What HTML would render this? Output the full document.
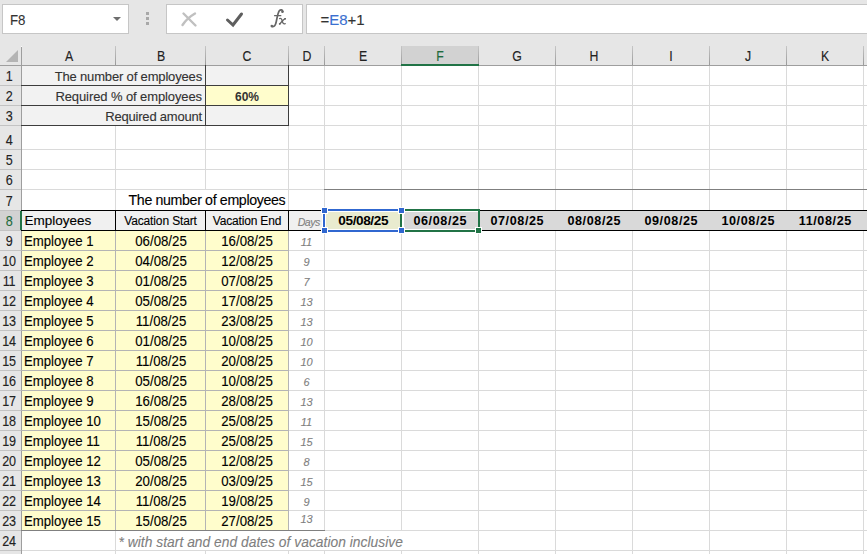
<!DOCTYPE html>
<html><head><meta charset="utf-8"><title>sheet</title><style>
html,body{margin:0;padding:0}
body{width:867px;height:554px;overflow:hidden;background:#e6e6e6;position:relative;font-family:"Liberation Sans",sans-serif}
.a{position:absolute}
.t{position:absolute;white-space:nowrap;line-height:1;-webkit-text-stroke:0.12px currentColor}
svg.a{display:block}
</style></head><body>
<div class="a" style="left:2px;top:4px;width:127px;height:30px;background:#fff;box-sizing:border-box;border:1px solid #c6c6c6;"></div>
<div class="t" style="top:12.10px;font-size:15px;color:#333;font-weight:normal;font-style:normal;left:10px;transform:scaleX(0.885);transform-origin:0 0;">F8</div>
<div class="a" style="left:113px;top:17px;width:0;height:0;border-left:4px solid transparent;border-right:4px solid transparent;border-top:4px solid #6e6e6e"></div>
<div class="a" style="left:146px;top:12px;width:3px;height:3px;background:#a8a8a8;"></div>
<div class="a" style="left:146px;top:17px;width:3px;height:3px;background:#a8a8a8;"></div>
<div class="a" style="left:146px;top:22px;width:3px;height:3px;background:#a8a8a8;"></div>
<div class="a" style="left:166px;top:4px;width:137px;height:30px;background:#fff;box-sizing:border-box;border:1px solid #c6c6c6;"></div>
<svg class="a" style="left:176px;top:8px" width="26" height="22" viewBox="0 0 26 22"><path d="M6.5 17 C9.5 12.5 13 9 19 5.5 M7.5 5.5 C11 9 15 13 19.5 17.5" stroke="#c0c0c0" stroke-width="2.4" fill="none" stroke-linecap="round"/></svg>
<svg class="a" style="left:222px;top:8px" width="26" height="22" viewBox="0 0 26 22"><path d="M5.5 12 L11 17 L19.5 6" stroke="#5e5e5e" stroke-width="3" fill="none" stroke-linecap="round" stroke-linejoin="miter"/></svg>
<svg class="a" style="left:264px;top:6px" width="28" height="26" viewBox="0 0 28 26"><g fill="none" stroke="#666" stroke-linecap="round"><path d="M18.8 5.6 C18.6 3.6 16.6 3.2 15.3 4.8 C14 6.6 13.2 11 12.3 15.5 C11.6 19 10.5 21.2 8.2 20.6" stroke-width="1.7"/><path d="M10.6 9.7 L16.8 9.7" stroke-width="1.3"/><path d="M15.6 12.6 C17.2 12 17.8 13.2 18.3 15 C18.8 17 19.4 18.6 21.2 17.6" stroke-width="1.3"/><path d="M21.4 12.6 C19.8 13.2 17.6 15.6 15.8 18" stroke-width="1.3"/></g><g fill="#666"><circle cx="18.4" cy="5.8" r="1.25"/><circle cx="7.8" cy="20" r="1.3"/><circle cx="21" cy="12.8" r="0.9"/><circle cx="15.7" cy="17.8" r="0.9"/></g></svg>
<div class="a" style="left:306px;top:4px;width:600px;height:30px;background:#fff;box-sizing:border-box;border:1px solid #c6c6c6;"></div>
<div class="t" style="top:11.90px;font-size:15px;color:#333;font-weight:normal;font-style:normal;left:320.4px;">=<span style="color:#3a6fd0">E8</span>+1</div>
<div class="a" style="left:402px;top:46px;width:76px;height:18px;background:#d2d2d2;"></div>
<div class="a" style="left:115px;top:46px;width:1px;height:19px;background:linear-gradient(#c6c6c6,#9a9a9a);"></div>
<div class="a" style="left:205px;top:46px;width:1px;height:19px;background:linear-gradient(#c6c6c6,#9a9a9a);"></div>
<div class="a" style="left:288px;top:46px;width:1px;height:19px;background:linear-gradient(#c6c6c6,#9a9a9a);"></div>
<div class="a" style="left:324px;top:46px;width:1px;height:19px;background:linear-gradient(#c6c6c6,#9a9a9a);"></div>
<div class="a" style="left:401px;top:46px;width:1px;height:19px;background:linear-gradient(#c6c6c6,#9a9a9a);"></div>
<div class="a" style="left:478px;top:46px;width:1px;height:19px;background:linear-gradient(#c6c6c6,#9a9a9a);"></div>
<div class="a" style="left:555px;top:46px;width:1px;height:19px;background:linear-gradient(#c6c6c6,#9a9a9a);"></div>
<div class="a" style="left:632px;top:46px;width:1px;height:19px;background:linear-gradient(#c6c6c6,#9a9a9a);"></div>
<div class="a" style="left:709px;top:46px;width:1px;height:19px;background:linear-gradient(#c6c6c6,#9a9a9a);"></div>
<div class="a" style="left:786px;top:46px;width:1px;height:19px;background:linear-gradient(#c6c6c6,#9a9a9a);"></div>
<div class="a" style="left:863px;top:46px;width:1px;height:19px;background:linear-gradient(#c6c6c6,#9a9a9a);"></div>
<div class="a" style="left:0px;top:65px;width:868px;height:1px;background:#9e9e9e;"></div>
<div class="a" style="left:401px;top:64px;width:78px;height:2px;background:#217346;"></div>
<div class="t" style="top:48.90px;font-size:14.3px;color:#222;font-weight:normal;font-style:normal;left:-131.5px;width:400px;text-align:center;transform:scaleX(0.86);">A</div>
<div class="t" style="top:48.90px;font-size:14.3px;color:#222;font-weight:normal;font-style:normal;left:-39.5px;width:400px;text-align:center;transform:scaleX(0.86);">B</div>
<div class="t" style="top:48.90px;font-size:14.3px;color:#222;font-weight:normal;font-style:normal;left:47.0px;width:400px;text-align:center;transform:scaleX(0.86);">C</div>
<div class="t" style="top:48.90px;font-size:14.3px;color:#222;font-weight:normal;font-style:normal;left:106.5px;width:400px;text-align:center;transform:scaleX(0.86);">D</div>
<div class="t" style="top:48.90px;font-size:14.3px;color:#222;font-weight:normal;font-style:normal;left:163.0px;width:400px;text-align:center;transform:scaleX(0.86);">E</div>
<div class="t" style="top:48.90px;font-size:14.3px;color:#1e6b3c;font-weight:normal;font-style:normal;left:240.0px;width:400px;text-align:center;transform:scaleX(0.86);">F</div>
<div class="t" style="top:48.90px;font-size:14.3px;color:#222;font-weight:normal;font-style:normal;left:317.0px;width:400px;text-align:center;transform:scaleX(0.86);">G</div>
<div class="t" style="top:48.90px;font-size:14.3px;color:#222;font-weight:normal;font-style:normal;left:394.0px;width:400px;text-align:center;transform:scaleX(0.86);">H</div>
<div class="t" style="top:48.90px;font-size:14.3px;color:#222;font-weight:normal;font-style:normal;left:471.0px;width:400px;text-align:center;transform:scaleX(0.86);">I</div>
<div class="t" style="top:48.90px;font-size:14.3px;color:#222;font-weight:normal;font-style:normal;left:548.0px;width:400px;text-align:center;transform:scaleX(0.86);">J</div>
<div class="t" style="top:48.90px;font-size:14.3px;color:#222;font-weight:normal;font-style:normal;left:625.0px;width:400px;text-align:center;transform:scaleX(0.86);">K</div>
<svg class="a" style="left:0;top:46px" width="21" height="19"><polygon points="6,16 18,4 18,16" fill="#b4b4b4"/></svg>
<div class="a" style="left:21px;top:47px;width:1px;height:508px;background:#9e9e9e;"></div>
<div class="a" style="left:21px;top:46px;width:1px;height:1px;background:#fafafa;"></div>
<div class="a" style="left:22px;top:66px;width:845px;height:488px;background:#fff;"></div>
<div class="a" style="left:0px;top:211px;width:21px;height:19px;background:#d2d2d2;"></div>
<div class="a" style="left:0px;top:85px;width:21px;height:1px;background:#c3c3c3;"></div>
<div class="t" style="top:69.20px;font-size:14.3px;color:#222;font-weight:normal;font-style:normal;letter-spacing:-0.3px;left:-191.5px;width:400px;text-align:center;transform:scaleX(0.88);">1</div>
<div class="a" style="left:0px;top:105px;width:21px;height:1px;background:#c3c3c3;"></div>
<div class="t" style="top:89.20px;font-size:14.3px;color:#222;font-weight:normal;font-style:normal;letter-spacing:-0.3px;left:-191.5px;width:400px;text-align:center;transform:scaleX(0.88);">2</div>
<div class="a" style="left:0px;top:125px;width:21px;height:1px;background:#c3c3c3;"></div>
<div class="t" style="top:109.20px;font-size:14.3px;color:#222;font-weight:normal;font-style:normal;letter-spacing:-0.3px;left:-191.5px;width:400px;text-align:center;transform:scaleX(0.88);">3</div>
<div class="a" style="left:0px;top:149px;width:21px;height:1px;background:#c3c3c3;"></div>
<div class="t" style="top:133.20px;font-size:14.3px;color:#222;font-weight:normal;font-style:normal;letter-spacing:-0.3px;left:-191.5px;width:400px;text-align:center;transform:scaleX(0.88);">4</div>
<div class="a" style="left:0px;top:169px;width:21px;height:1px;background:#c3c3c3;"></div>
<div class="t" style="top:153.20px;font-size:14.3px;color:#222;font-weight:normal;font-style:normal;letter-spacing:-0.3px;left:-191.5px;width:400px;text-align:center;transform:scaleX(0.88);">5</div>
<div class="a" style="left:0px;top:189px;width:21px;height:1px;background:#c3c3c3;"></div>
<div class="t" style="top:173.20px;font-size:14.3px;color:#222;font-weight:normal;font-style:normal;letter-spacing:-0.3px;left:-191.5px;width:400px;text-align:center;transform:scaleX(0.88);">6</div>
<div class="a" style="left:0px;top:210px;width:21px;height:1px;background:#c3c3c3;"></div>
<div class="t" style="top:194.20px;font-size:14.3px;color:#222;font-weight:normal;font-style:normal;letter-spacing:-0.3px;left:-191.5px;width:400px;text-align:center;transform:scaleX(0.88);">7</div>
<div class="a" style="left:0px;top:230px;width:21px;height:1px;background:#c3c3c3;"></div>
<div class="t" style="top:214.20px;font-size:14.3px;color:#1e6b3c;font-weight:normal;font-style:normal;letter-spacing:-0.3px;left:-191.5px;width:400px;text-align:center;transform:scaleX(0.88);">8</div>
<div class="a" style="left:0px;top:250px;width:21px;height:1px;background:#c3c3c3;"></div>
<div class="t" style="top:234.20px;font-size:14.3px;color:#222;font-weight:normal;font-style:normal;letter-spacing:-0.3px;left:-191.5px;width:400px;text-align:center;transform:scaleX(0.88);">9</div>
<div class="a" style="left:0px;top:270px;width:21px;height:1px;background:#c3c3c3;"></div>
<div class="t" style="top:254.20px;font-size:14.3px;color:#222;font-weight:normal;font-style:normal;letter-spacing:-0.3px;left:-191.5px;width:400px;text-align:center;transform:scaleX(0.88);">10</div>
<div class="a" style="left:0px;top:290px;width:21px;height:1px;background:#c3c3c3;"></div>
<div class="t" style="top:274.20px;font-size:14.3px;color:#222;font-weight:normal;font-style:normal;letter-spacing:-0.3px;left:-191.5px;width:400px;text-align:center;transform:scaleX(0.88);">11</div>
<div class="a" style="left:0px;top:310px;width:21px;height:1px;background:#c3c3c3;"></div>
<div class="t" style="top:294.20px;font-size:14.3px;color:#222;font-weight:normal;font-style:normal;letter-spacing:-0.3px;left:-191.5px;width:400px;text-align:center;transform:scaleX(0.88);">12</div>
<div class="a" style="left:0px;top:330px;width:21px;height:1px;background:#c3c3c3;"></div>
<div class="t" style="top:314.20px;font-size:14.3px;color:#222;font-weight:normal;font-style:normal;letter-spacing:-0.3px;left:-191.5px;width:400px;text-align:center;transform:scaleX(0.88);">13</div>
<div class="a" style="left:0px;top:350px;width:21px;height:1px;background:#c3c3c3;"></div>
<div class="t" style="top:334.20px;font-size:14.3px;color:#222;font-weight:normal;font-style:normal;letter-spacing:-0.3px;left:-191.5px;width:400px;text-align:center;transform:scaleX(0.88);">14</div>
<div class="a" style="left:0px;top:370px;width:21px;height:1px;background:#c3c3c3;"></div>
<div class="t" style="top:354.20px;font-size:14.3px;color:#222;font-weight:normal;font-style:normal;letter-spacing:-0.3px;left:-191.5px;width:400px;text-align:center;transform:scaleX(0.88);">15</div>
<div class="a" style="left:0px;top:390px;width:21px;height:1px;background:#c3c3c3;"></div>
<div class="t" style="top:374.20px;font-size:14.3px;color:#222;font-weight:normal;font-style:normal;letter-spacing:-0.3px;left:-191.5px;width:400px;text-align:center;transform:scaleX(0.88);">16</div>
<div class="a" style="left:0px;top:410px;width:21px;height:1px;background:#c3c3c3;"></div>
<div class="t" style="top:394.20px;font-size:14.3px;color:#222;font-weight:normal;font-style:normal;letter-spacing:-0.3px;left:-191.5px;width:400px;text-align:center;transform:scaleX(0.88);">17</div>
<div class="a" style="left:0px;top:430px;width:21px;height:1px;background:#c3c3c3;"></div>
<div class="t" style="top:414.20px;font-size:14.3px;color:#222;font-weight:normal;font-style:normal;letter-spacing:-0.3px;left:-191.5px;width:400px;text-align:center;transform:scaleX(0.88);">18</div>
<div class="a" style="left:0px;top:450px;width:21px;height:1px;background:#c3c3c3;"></div>
<div class="t" style="top:434.20px;font-size:14.3px;color:#222;font-weight:normal;font-style:normal;letter-spacing:-0.3px;left:-191.5px;width:400px;text-align:center;transform:scaleX(0.88);">19</div>
<div class="a" style="left:0px;top:470px;width:21px;height:1px;background:#c3c3c3;"></div>
<div class="t" style="top:454.20px;font-size:14.3px;color:#222;font-weight:normal;font-style:normal;letter-spacing:-0.3px;left:-191.5px;width:400px;text-align:center;transform:scaleX(0.88);">20</div>
<div class="a" style="left:0px;top:490px;width:21px;height:1px;background:#c3c3c3;"></div>
<div class="t" style="top:474.20px;font-size:14.3px;color:#222;font-weight:normal;font-style:normal;letter-spacing:-0.3px;left:-191.5px;width:400px;text-align:center;transform:scaleX(0.88);">21</div>
<div class="a" style="left:0px;top:510px;width:21px;height:1px;background:#c3c3c3;"></div>
<div class="t" style="top:494.20px;font-size:14.3px;color:#222;font-weight:normal;font-style:normal;letter-spacing:-0.3px;left:-191.5px;width:400px;text-align:center;transform:scaleX(0.88);">22</div>
<div class="a" style="left:0px;top:530px;width:21px;height:1px;background:#c3c3c3;"></div>
<div class="t" style="top:514.20px;font-size:14.3px;color:#222;font-weight:normal;font-style:normal;letter-spacing:-0.3px;left:-191.5px;width:400px;text-align:center;transform:scaleX(0.88);">23</div>
<div class="a" style="left:0px;top:550px;width:21px;height:1px;background:#c3c3c3;"></div>
<div class="t" style="top:534.20px;font-size:14.3px;color:#222;font-weight:normal;font-style:normal;letter-spacing:-0.3px;left:-191.5px;width:400px;text-align:center;transform:scaleX(0.88);">24</div>
<div class="a" style="left:20px;top:211px;width:2px;height:19px;background:#217346;"></div>
<div class="a" style="left:22px;top:85px;width:846px;height:1px;background:#dadada;"></div>
<div class="a" style="left:22px;top:105px;width:846px;height:1px;background:#dadada;"></div>
<div class="a" style="left:22px;top:125px;width:846px;height:1px;background:#dadada;"></div>
<div class="a" style="left:22px;top:149px;width:846px;height:1px;background:#dadada;"></div>
<div class="a" style="left:22px;top:169px;width:846px;height:1px;background:#dadada;"></div>
<div class="a" style="left:22px;top:189px;width:846px;height:1px;background:#dadada;"></div>
<div class="a" style="left:22px;top:210px;width:846px;height:1px;background:#dadada;"></div>
<div class="a" style="left:22px;top:230px;width:846px;height:1px;background:#dadada;"></div>
<div class="a" style="left:22px;top:250px;width:846px;height:1px;background:#dadada;"></div>
<div class="a" style="left:22px;top:270px;width:846px;height:1px;background:#dadada;"></div>
<div class="a" style="left:22px;top:290px;width:846px;height:1px;background:#dadada;"></div>
<div class="a" style="left:22px;top:310px;width:846px;height:1px;background:#dadada;"></div>
<div class="a" style="left:22px;top:330px;width:846px;height:1px;background:#dadada;"></div>
<div class="a" style="left:22px;top:350px;width:846px;height:1px;background:#dadada;"></div>
<div class="a" style="left:22px;top:370px;width:846px;height:1px;background:#dadada;"></div>
<div class="a" style="left:22px;top:390px;width:846px;height:1px;background:#dadada;"></div>
<div class="a" style="left:22px;top:410px;width:846px;height:1px;background:#dadada;"></div>
<div class="a" style="left:22px;top:430px;width:846px;height:1px;background:#dadada;"></div>
<div class="a" style="left:22px;top:450px;width:846px;height:1px;background:#dadada;"></div>
<div class="a" style="left:22px;top:470px;width:846px;height:1px;background:#dadada;"></div>
<div class="a" style="left:22px;top:490px;width:846px;height:1px;background:#dadada;"></div>
<div class="a" style="left:22px;top:510px;width:846px;height:1px;background:#dadada;"></div>
<div class="a" style="left:22px;top:530px;width:846px;height:1px;background:#dadada;"></div>
<div class="a" style="left:22px;top:550px;width:846px;height:1px;background:#dadada;"></div>
<div class="a" style="left:115px;top:66px;width:1px;height:489px;background:#dadada;"></div>
<div class="a" style="left:205px;top:66px;width:1px;height:489px;background:#dadada;"></div>
<div class="a" style="left:288px;top:66px;width:1px;height:489px;background:#dadada;"></div>
<div class="a" style="left:324px;top:66px;width:1px;height:489px;background:#dadada;"></div>
<div class="a" style="left:401px;top:66px;width:1px;height:489px;background:#dadada;"></div>
<div class="a" style="left:478px;top:66px;width:1px;height:489px;background:#dadada;"></div>
<div class="a" style="left:555px;top:66px;width:1px;height:489px;background:#dadada;"></div>
<div class="a" style="left:632px;top:66px;width:1px;height:489px;background:#dadada;"></div>
<div class="a" style="left:709px;top:66px;width:1px;height:489px;background:#dadada;"></div>
<div class="a" style="left:786px;top:66px;width:1px;height:489px;background:#dadada;"></div>
<div class="a" style="left:863px;top:66px;width:1px;height:489px;background:#dadada;"></div>
<div class="a" style="left:22px;top:66px;width:183px;height:19px;background:#f2f2f2;"></div>
<div class="a" style="left:206px;top:66px;width:82px;height:19px;background:#f2f2f2;"></div>
<div class="a" style="left:22px;top:86px;width:183px;height:19px;background:#f2f2f2;"></div>
<div class="a" style="left:206px;top:86px;width:82px;height:19px;background:#fffdcc;"></div>
<div class="a" style="left:22px;top:106px;width:183px;height:19px;background:#f2f2f2;"></div>
<div class="a" style="left:206px;top:106px;width:82px;height:19px;background:#f2f2f2;"></div>
<div class="a" style="left:21px;top:85px;width:268px;height:1px;background:#3d3d3d;"></div>
<div class="a" style="left:21px;top:105px;width:268px;height:1px;background:#3d3d3d;"></div>
<div class="a" style="left:21px;top:125px;width:268px;height:1px;background:#3d3d3d;"></div>
<div class="a" style="left:205px;top:65px;width:1px;height:61px;background:#3d3d3d;"></div>
<div class="a" style="left:288px;top:65px;width:1px;height:61px;background:#3d3d3d;"></div>
<div class="t" style="top:70.00px;font-size:13px;color:#333;font-weight:normal;font-style:normal;letter-spacing:-0.16px;left:-198px;width:400px;text-align:right;">The number of employees</div>
<div class="t" style="top:90.00px;font-size:13px;color:#333;font-weight:normal;font-style:normal;letter-spacing:-0.1px;left:-198px;width:400px;text-align:right;">Required % of employees</div>
<div class="t" style="top:110.00px;font-size:13px;color:#333;font-weight:normal;font-style:normal;letter-spacing:-0.2px;left:-198px;width:400px;text-align:right;">Required amount</div>
<div class="t" style="top:90.84px;font-size:12px;color:#333;font-weight:bold;font-style:normal;-webkit-text-stroke:0;left:47px;width:400px;text-align:center;">60%</div>
<div class="a" style="left:116px;top:190px;width:172px;height:20px;background:#fff;"></div>
<div class="t" style="top:192.98px;font-size:14.2px;color:#000;font-weight:normal;font-style:normal;letter-spacing:-0.35px;left:-114.69999999999999px;width:400px;text-align:right;">The number of employees</div>
<div class="a" style="left:324px;top:189px;width:544px;height:1px;background:#7f7f7f;"></div>
<div class="a" style="left:22px;top:211px;width:300px;height:19px;background:#f0f0f0;"></div>
<div class="a" style="left:325px;top:211px;width:76px;height:19px;background:#fff;"></div>
<div class="a" style="left:326px;top:212px;width:74px;height:17px;background:#e9ebcf;"></div>
<div class="a" style="left:402px;top:211px;width:76px;height:19px;background:#fff;"></div>
<div class="a" style="left:404px;top:212px;width:74px;height:17px;background:#d9d9d9;"></div>
<div class="a" style="left:479px;top:211px;width:388px;height:19px;background:#d9d9d9;"></div>
<div class="a" style="left:21px;top:210px;width:301px;height:1px;background:#000;"></div>
<div class="a" style="left:21px;top:230px;width:301px;height:1px;background:#000;"></div>
<div class="a" style="left:324px;top:210px;width:544px;height:1px;background:#000;"></div>
<div class="a" style="left:324px;top:230px;width:544px;height:1px;background:#000;"></div>
<div class="a" style="left:115px;top:210px;width:1px;height:21px;background:#000;"></div>
<div class="a" style="left:205px;top:210px;width:1px;height:21px;background:#000;"></div>
<div class="a" style="left:288px;top:210px;width:1px;height:21px;background:#000;"></div>
<div class="t" style="top:214.37px;font-size:13.5px;color:#000;font-weight:normal;font-style:normal;left:24.5px;">Employees</div>
<div class="t" style="top:214.64px;font-size:12px;color:#000;font-weight:normal;font-style:normal;letter-spacing:-0.13px;left:-39.5px;width:400px;text-align:center;">Vacation Start</div>
<div class="t" style="top:214.64px;font-size:12px;color:#000;font-weight:normal;font-style:normal;letter-spacing:-0.18px;left:47px;width:400px;text-align:center;">Vacation End</div>
<div class="t" style="top:216.63px;font-size:10.6px;color:#7f7f7f;font-weight:normal;font-style:italic;letter-spacing:-0.5px;left:-80.19999999999999px;width:400px;text-align:right;">Days</div>
<div class="t" style="top:213.69px;font-size:13.6px;color:#000;font-weight:bold;font-style:normal;letter-spacing:-0.4px;-webkit-text-stroke:0;left:163.2px;width:400px;text-align:center;">05/08/25</div>
<div class="t" style="top:214.53px;font-size:12.6px;color:#000;font-weight:bold;font-style:normal;letter-spacing:0.6px;-webkit-text-stroke:0;left:240.3px;width:400px;text-align:center;">06/08/25</div>
<div class="t" style="top:214.53px;font-size:12.6px;color:#000;font-weight:bold;font-style:normal;letter-spacing:0.6px;-webkit-text-stroke:0;left:317.29999999999995px;width:400px;text-align:center;">07/08/25</div>
<div class="t" style="top:214.53px;font-size:12.6px;color:#000;font-weight:bold;font-style:normal;letter-spacing:0.6px;-webkit-text-stroke:0;left:394.29999999999995px;width:400px;text-align:center;">08/08/25</div>
<div class="t" style="top:214.53px;font-size:12.6px;color:#000;font-weight:bold;font-style:normal;letter-spacing:0.6px;-webkit-text-stroke:0;left:471.29999999999995px;width:400px;text-align:center;">09/08/25</div>
<div class="t" style="top:214.53px;font-size:12.6px;color:#000;font-weight:bold;font-style:normal;letter-spacing:0.6px;-webkit-text-stroke:0;left:548.3px;width:400px;text-align:center;">10/08/25</div>
<div class="t" style="top:214.53px;font-size:12.6px;color:#000;font-weight:bold;font-style:normal;letter-spacing:0.6px;-webkit-text-stroke:0;left:625.3px;width:400px;text-align:center;">11/08/25</div>
<div class="a" style="left:324px;top:209px;width:77px;height:2px;background:#3067d0;"></div>
<div class="a" style="left:324px;top:230px;width:77px;height:2px;background:#3067d0;"></div>
<div class="a" style="left:323px;top:209px;width:2px;height:23px;background:#3067d0;"></div>
<div class="a" style="left:400px;top:209px;width:80px;height:2px;background:#217346;"></div>
<div class="a" style="left:400px;top:230px;width:80px;height:2px;background:#217346;"></div>
<div class="a" style="left:400px;top:209px;width:2px;height:23px;background:#217346;"></div>
<div class="a" style="left:478px;top:209px;width:2px;height:23px;background:#217346;"></div>
<div class="a" style="left:321px;top:207px;width:5px;height:5px;background:#3067d0;border:1px solid #fff"></div>
<div class="a" style="left:321px;top:227px;width:5px;height:5px;background:#3067d0;border:1px solid #fff"></div>
<div class="a" style="left:398px;top:207px;width:5px;height:5px;background:#3067d0;border:1px solid #fff"></div>
<div class="a" style="left:398px;top:227px;width:5px;height:5px;background:#3067d0;border:1px solid #fff"></div>
<div class="a" style="left:475px;top:227px;width:5px;height:5px;background:#217346;border:1px solid #fff"></div>
<div class="a" style="left:22px;top:231px;width:266px;height:299px;background:#fffdcc;"></div>
<div class="a" style="left:21px;top:250px;width:268px;height:1px;background:#b4b4b4;"></div>
<div class="a" style="left:21px;top:270px;width:268px;height:1px;background:#b4b4b4;"></div>
<div class="a" style="left:21px;top:290px;width:268px;height:1px;background:#b4b4b4;"></div>
<div class="a" style="left:21px;top:310px;width:268px;height:1px;background:#b4b4b4;"></div>
<div class="a" style="left:21px;top:330px;width:268px;height:1px;background:#b4b4b4;"></div>
<div class="a" style="left:21px;top:350px;width:268px;height:1px;background:#b4b4b4;"></div>
<div class="a" style="left:21px;top:370px;width:268px;height:1px;background:#b4b4b4;"></div>
<div class="a" style="left:21px;top:390px;width:268px;height:1px;background:#b4b4b4;"></div>
<div class="a" style="left:21px;top:410px;width:268px;height:1px;background:#b4b4b4;"></div>
<div class="a" style="left:21px;top:430px;width:268px;height:1px;background:#b4b4b4;"></div>
<div class="a" style="left:21px;top:450px;width:268px;height:1px;background:#b4b4b4;"></div>
<div class="a" style="left:21px;top:470px;width:268px;height:1px;background:#b4b4b4;"></div>
<div class="a" style="left:21px;top:490px;width:268px;height:1px;background:#b4b4b4;"></div>
<div class="a" style="left:21px;top:510px;width:268px;height:1px;background:#b4b4b4;"></div>
<div class="a" style="left:115px;top:231px;width:1px;height:299px;background:#b4b4b4;"></div>
<div class="a" style="left:205px;top:231px;width:1px;height:299px;background:#b4b4b4;"></div>
<div class="a" style="left:288px;top:231px;width:1px;height:299px;background:#b4b4b4;"></div>
<div class="a" style="left:21px;top:530px;width:304px;height:1px;background:#808080;"></div>
<div class="t" style="top:234.52px;font-size:13.8px;color:#000;font-weight:normal;font-style:normal;left:24px;transform:scaleX(0.955);transform-origin:0 0;">Employee 1</div>
<div class="t" style="top:234.15px;font-size:14px;color:#000;font-weight:normal;font-style:normal;left:-39.5px;width:400px;text-align:center;transform:scaleX(0.945);">06/08/25</div>
<div class="t" style="top:234.15px;font-size:14px;color:#000;font-weight:normal;font-style:normal;left:47px;width:400px;text-align:center;transform:scaleX(0.945);">16/08/25</div>
<div class="t" style="top:236.79px;font-size:11px;color:#7f7f7f;font-weight:normal;font-style:italic;left:106.5px;width:400px;text-align:center;">11</div>
<div class="t" style="top:254.52px;font-size:13.8px;color:#000;font-weight:normal;font-style:normal;left:24px;transform:scaleX(0.955);transform-origin:0 0;">Employee 2</div>
<div class="t" style="top:254.15px;font-size:14px;color:#000;font-weight:normal;font-style:normal;left:-39.5px;width:400px;text-align:center;transform:scaleX(0.945);">04/08/25</div>
<div class="t" style="top:254.15px;font-size:14px;color:#000;font-weight:normal;font-style:normal;left:47px;width:400px;text-align:center;transform:scaleX(0.945);">12/08/25</div>
<div class="t" style="top:256.79px;font-size:11px;color:#7f7f7f;font-weight:normal;font-style:italic;left:106.5px;width:400px;text-align:center;">9</div>
<div class="t" style="top:274.52px;font-size:13.8px;color:#000;font-weight:normal;font-style:normal;left:24px;transform:scaleX(0.955);transform-origin:0 0;">Employee 3</div>
<div class="t" style="top:274.15px;font-size:14px;color:#000;font-weight:normal;font-style:normal;left:-39.5px;width:400px;text-align:center;transform:scaleX(0.945);">01/08/25</div>
<div class="t" style="top:274.15px;font-size:14px;color:#000;font-weight:normal;font-style:normal;left:47px;width:400px;text-align:center;transform:scaleX(0.945);">07/08/25</div>
<div class="t" style="top:276.79px;font-size:11px;color:#7f7f7f;font-weight:normal;font-style:italic;left:106.5px;width:400px;text-align:center;">7</div>
<div class="t" style="top:294.52px;font-size:13.8px;color:#000;font-weight:normal;font-style:normal;left:24px;transform:scaleX(0.955);transform-origin:0 0;">Employee 4</div>
<div class="t" style="top:294.15px;font-size:14px;color:#000;font-weight:normal;font-style:normal;left:-39.5px;width:400px;text-align:center;transform:scaleX(0.945);">05/08/25</div>
<div class="t" style="top:294.15px;font-size:14px;color:#000;font-weight:normal;font-style:normal;left:47px;width:400px;text-align:center;transform:scaleX(0.945);">17/08/25</div>
<div class="t" style="top:296.79px;font-size:11px;color:#7f7f7f;font-weight:normal;font-style:italic;left:106.5px;width:400px;text-align:center;">13</div>
<div class="t" style="top:314.52px;font-size:13.8px;color:#000;font-weight:normal;font-style:normal;left:24px;transform:scaleX(0.955);transform-origin:0 0;">Employee 5</div>
<div class="t" style="top:314.15px;font-size:14px;color:#000;font-weight:normal;font-style:normal;left:-39.5px;width:400px;text-align:center;transform:scaleX(0.945);">11/08/25</div>
<div class="t" style="top:314.15px;font-size:14px;color:#000;font-weight:normal;font-style:normal;left:47px;width:400px;text-align:center;transform:scaleX(0.945);">23/08/25</div>
<div class="t" style="top:316.79px;font-size:11px;color:#7f7f7f;font-weight:normal;font-style:italic;left:106.5px;width:400px;text-align:center;">13</div>
<div class="t" style="top:334.52px;font-size:13.8px;color:#000;font-weight:normal;font-style:normal;left:24px;transform:scaleX(0.955);transform-origin:0 0;">Employee 6</div>
<div class="t" style="top:334.15px;font-size:14px;color:#000;font-weight:normal;font-style:normal;left:-39.5px;width:400px;text-align:center;transform:scaleX(0.945);">01/08/25</div>
<div class="t" style="top:334.15px;font-size:14px;color:#000;font-weight:normal;font-style:normal;left:47px;width:400px;text-align:center;transform:scaleX(0.945);">10/08/25</div>
<div class="t" style="top:336.79px;font-size:11px;color:#7f7f7f;font-weight:normal;font-style:italic;left:106.5px;width:400px;text-align:center;">10</div>
<div class="t" style="top:354.52px;font-size:13.8px;color:#000;font-weight:normal;font-style:normal;left:24px;transform:scaleX(0.955);transform-origin:0 0;">Employee 7</div>
<div class="t" style="top:354.15px;font-size:14px;color:#000;font-weight:normal;font-style:normal;left:-39.5px;width:400px;text-align:center;transform:scaleX(0.945);">11/08/25</div>
<div class="t" style="top:354.15px;font-size:14px;color:#000;font-weight:normal;font-style:normal;left:47px;width:400px;text-align:center;transform:scaleX(0.945);">20/08/25</div>
<div class="t" style="top:356.79px;font-size:11px;color:#7f7f7f;font-weight:normal;font-style:italic;left:106.5px;width:400px;text-align:center;">10</div>
<div class="t" style="top:374.52px;font-size:13.8px;color:#000;font-weight:normal;font-style:normal;left:24px;transform:scaleX(0.955);transform-origin:0 0;">Employee 8</div>
<div class="t" style="top:374.15px;font-size:14px;color:#000;font-weight:normal;font-style:normal;left:-39.5px;width:400px;text-align:center;transform:scaleX(0.945);">05/08/25</div>
<div class="t" style="top:374.15px;font-size:14px;color:#000;font-weight:normal;font-style:normal;left:47px;width:400px;text-align:center;transform:scaleX(0.945);">10/08/25</div>
<div class="t" style="top:376.79px;font-size:11px;color:#7f7f7f;font-weight:normal;font-style:italic;left:106.5px;width:400px;text-align:center;">6</div>
<div class="t" style="top:394.52px;font-size:13.8px;color:#000;font-weight:normal;font-style:normal;left:24px;transform:scaleX(0.955);transform-origin:0 0;">Employee 9</div>
<div class="t" style="top:394.15px;font-size:14px;color:#000;font-weight:normal;font-style:normal;left:-39.5px;width:400px;text-align:center;transform:scaleX(0.945);">16/08/25</div>
<div class="t" style="top:394.15px;font-size:14px;color:#000;font-weight:normal;font-style:normal;left:47px;width:400px;text-align:center;transform:scaleX(0.945);">28/08/25</div>
<div class="t" style="top:396.79px;font-size:11px;color:#7f7f7f;font-weight:normal;font-style:italic;left:106.5px;width:400px;text-align:center;">13</div>
<div class="t" style="top:414.52px;font-size:13.8px;color:#000;font-weight:normal;font-style:normal;left:24px;transform:scaleX(0.955);transform-origin:0 0;">Employee 10</div>
<div class="t" style="top:414.15px;font-size:14px;color:#000;font-weight:normal;font-style:normal;left:-39.5px;width:400px;text-align:center;transform:scaleX(0.945);">15/08/25</div>
<div class="t" style="top:414.15px;font-size:14px;color:#000;font-weight:normal;font-style:normal;left:47px;width:400px;text-align:center;transform:scaleX(0.945);">25/08/25</div>
<div class="t" style="top:416.79px;font-size:11px;color:#7f7f7f;font-weight:normal;font-style:italic;left:106.5px;width:400px;text-align:center;">11</div>
<div class="t" style="top:434.52px;font-size:13.8px;color:#000;font-weight:normal;font-style:normal;left:24px;transform:scaleX(0.955);transform-origin:0 0;">Employee 11</div>
<div class="t" style="top:434.15px;font-size:14px;color:#000;font-weight:normal;font-style:normal;left:-39.5px;width:400px;text-align:center;transform:scaleX(0.945);">11/08/25</div>
<div class="t" style="top:434.15px;font-size:14px;color:#000;font-weight:normal;font-style:normal;left:47px;width:400px;text-align:center;transform:scaleX(0.945);">25/08/25</div>
<div class="t" style="top:436.79px;font-size:11px;color:#7f7f7f;font-weight:normal;font-style:italic;left:106.5px;width:400px;text-align:center;">15</div>
<div class="t" style="top:454.52px;font-size:13.8px;color:#000;font-weight:normal;font-style:normal;left:24px;transform:scaleX(0.955);transform-origin:0 0;">Employee 12</div>
<div class="t" style="top:454.15px;font-size:14px;color:#000;font-weight:normal;font-style:normal;left:-39.5px;width:400px;text-align:center;transform:scaleX(0.945);">05/08/25</div>
<div class="t" style="top:454.15px;font-size:14px;color:#000;font-weight:normal;font-style:normal;left:47px;width:400px;text-align:center;transform:scaleX(0.945);">12/08/25</div>
<div class="t" style="top:456.79px;font-size:11px;color:#7f7f7f;font-weight:normal;font-style:italic;left:106.5px;width:400px;text-align:center;">8</div>
<div class="t" style="top:474.52px;font-size:13.8px;color:#000;font-weight:normal;font-style:normal;left:24px;transform:scaleX(0.955);transform-origin:0 0;">Employee 13</div>
<div class="t" style="top:474.15px;font-size:14px;color:#000;font-weight:normal;font-style:normal;left:-39.5px;width:400px;text-align:center;transform:scaleX(0.945);">20/08/25</div>
<div class="t" style="top:474.15px;font-size:14px;color:#000;font-weight:normal;font-style:normal;left:47px;width:400px;text-align:center;transform:scaleX(0.945);">03/09/25</div>
<div class="t" style="top:476.79px;font-size:11px;color:#7f7f7f;font-weight:normal;font-style:italic;left:106.5px;width:400px;text-align:center;">15</div>
<div class="t" style="top:494.52px;font-size:13.8px;color:#000;font-weight:normal;font-style:normal;left:24px;transform:scaleX(0.955);transform-origin:0 0;">Employee 14</div>
<div class="t" style="top:494.15px;font-size:14px;color:#000;font-weight:normal;font-style:normal;left:-39.5px;width:400px;text-align:center;transform:scaleX(0.945);">11/08/25</div>
<div class="t" style="top:494.15px;font-size:14px;color:#000;font-weight:normal;font-style:normal;left:47px;width:400px;text-align:center;transform:scaleX(0.945);">19/08/25</div>
<div class="t" style="top:496.79px;font-size:11px;color:#7f7f7f;font-weight:normal;font-style:italic;left:106.5px;width:400px;text-align:center;">9</div>
<div class="t" style="top:514.52px;font-size:13.8px;color:#000;font-weight:normal;font-style:normal;left:24px;transform:scaleX(0.955);transform-origin:0 0;">Employee 15</div>
<div class="t" style="top:514.15px;font-size:14px;color:#000;font-weight:normal;font-style:normal;left:-39.5px;width:400px;text-align:center;transform:scaleX(0.945);">15/08/25</div>
<div class="t" style="top:514.15px;font-size:14px;color:#000;font-weight:normal;font-style:normal;left:47px;width:400px;text-align:center;transform:scaleX(0.945);">27/08/25</div>
<div class="t" style="top:513.59px;font-size:11px;color:#7f7f7f;font-weight:normal;font-style:italic;left:106.5px;width:400px;text-align:center;">13</div>
<div class="a" style="left:116px;top:531px;width:362px;height:19px;background:#fff;"></div>
<div class="t" style="top:535.62px;font-size:13.8px;color:#7f7f7f;font-weight:normal;font-style:italic;letter-spacing:0.03px;left:118.5px;">* with start and end dates of vacation inclusive</div>
</body></html>
